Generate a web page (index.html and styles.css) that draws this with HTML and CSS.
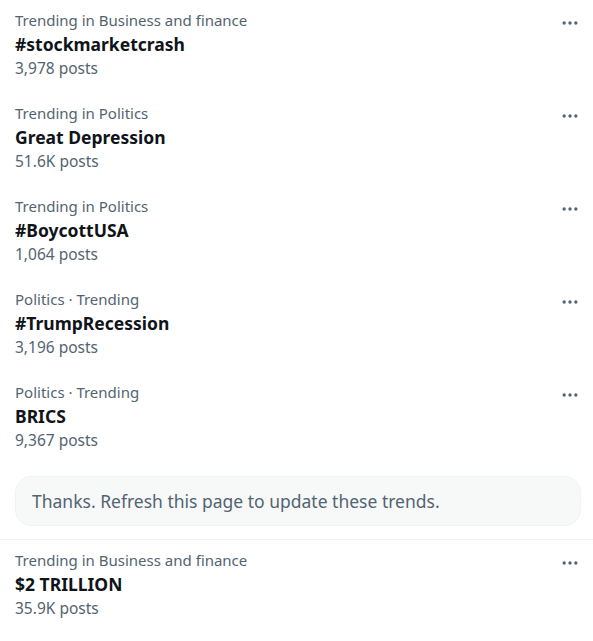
FILE: index.html
```html
<!DOCTYPE html>
<html lang="en">
<head>
    <meta charset="UTF-8">
    <title>Trends</title>
    <link rel="stylesheet" href="styles.css">
</head>
<body>
    <div class="trends">
        <div class="trend">
            <div class="trend-text">
                <div class="trend-context">Trending in Business and finance</div>
                <div class="trend-name">#stockmarketcrash</div>
                <div class="trend-count">3,978 posts</div>
            </div>
            <button class="more" aria-label="More">
                <svg viewBox="0 0 24 24"><circle cx="5" cy="12" r="2"/><circle cx="12" cy="12" r="2"/><circle cx="19" cy="12" r="2"/></svg>
            </button>
        </div>

        <div class="trend">
            <div class="trend-text">
                <div class="trend-context">Trending in Politics</div>
                <div class="trend-name">Great Depression</div>
                <div class="trend-count">51.6K posts</div>
            </div>
            <button class="more" aria-label="More">
                <svg viewBox="0 0 24 24"><circle cx="5" cy="12" r="2"/><circle cx="12" cy="12" r="2"/><circle cx="19" cy="12" r="2"/></svg>
            </button>
        </div>

        <div class="trend">
            <div class="trend-text">
                <div class="trend-context">Trending in Politics</div>
                <div class="trend-name">#BoycottUSA</div>
                <div class="trend-count">1,064 posts</div>
            </div>
            <button class="more" aria-label="More">
                <svg viewBox="0 0 24 24"><circle cx="5" cy="12" r="2"/><circle cx="12" cy="12" r="2"/><circle cx="19" cy="12" r="2"/></svg>
            </button>
        </div>

        <div class="trend">
            <div class="trend-text">
                <div class="trend-context">Politics · Trending</div>
                <div class="trend-name">#TrumpRecession</div>
                <div class="trend-count">3,196 posts</div>
            </div>
            <button class="more" aria-label="More">
                <svg viewBox="0 0 24 24"><circle cx="5" cy="12" r="2"/><circle cx="12" cy="12" r="2"/><circle cx="19" cy="12" r="2"/></svg>
            </button>
        </div>

        <div class="trend">
            <div class="trend-text">
                <div class="trend-context">Politics · Trending</div>
                <div class="trend-name">BRICS</div>
                <div class="trend-count">9,367 posts</div>
            </div>
            <button class="more" aria-label="More">
                <svg viewBox="0 0 24 24"><circle cx="5" cy="12" r="2"/><circle cx="12" cy="12" r="2"/><circle cx="19" cy="12" r="2"/></svg>
            </button>
        </div>

        <!-- feedback notice after hiding a trend -->
        <div class="notice-wrap">
            <div class="notice">Thanks. Refresh this page to update these trends.</div>
        </div>

        <div class="trend">
            <div class="trend-text">
                <div class="trend-context">Trending in Business and finance</div>
                <div class="trend-name">$2 TRILLION</div>
                <div class="trend-count">35.9K posts</div>
            </div>
            <button class="more" aria-label="More">
                <svg viewBox="0 0 24 24"><circle cx="5" cy="12" r="2"/><circle cx="12" cy="12" r="2"/><circle cx="19" cy="12" r="2"/></svg>
            </button>
        </div>
    </div>
</body>
</html>
```

FILE: styles.css
```css
body {
    font-family: 'Noto Sans', 'Open Sans', sans-serif;
    background-color: #fff;
    color: #0f1419;
    margin: 0;
}

.trends {
    width: 593px;
}

.trend {
    display: flex;
    justify-content: space-between;
    align-items: flex-start;
    padding: 9px 13px 13px 15px;
    height: 71px;
}

.trend-context {
    font-size: 15px;
    line-height: 23px;
    color: #536471;
}

.trend-name {
    font-size: 17.5px;
    font-weight: 700;
    line-height: 25px;
    color: #0f1419;
}

.trend-count {
    font-size: 15.5px;
    line-height: 23px;
    color: #536471;
}

.more {
    width: 20px;
    height: 20px;
    padding: 0;
    margin-top: 4px;
    border: none;
    background: none;
    cursor: pointer;
}

.more svg {
    width: 20px;
    height: 20px;
    fill: #536471;
}

.notice-wrap {
    padding: 11px 12px 13px 15px;
    border-bottom: 1px solid #eff3f4;
}

.notice {
    background-color: #f7f9f9;
    border: 1px solid #eff3f4;
    border-radius: 16px;
    padding: 12px 16px;
    font-size: 17.5px;
    line-height: 24px;
    color: #536471;
}
```
